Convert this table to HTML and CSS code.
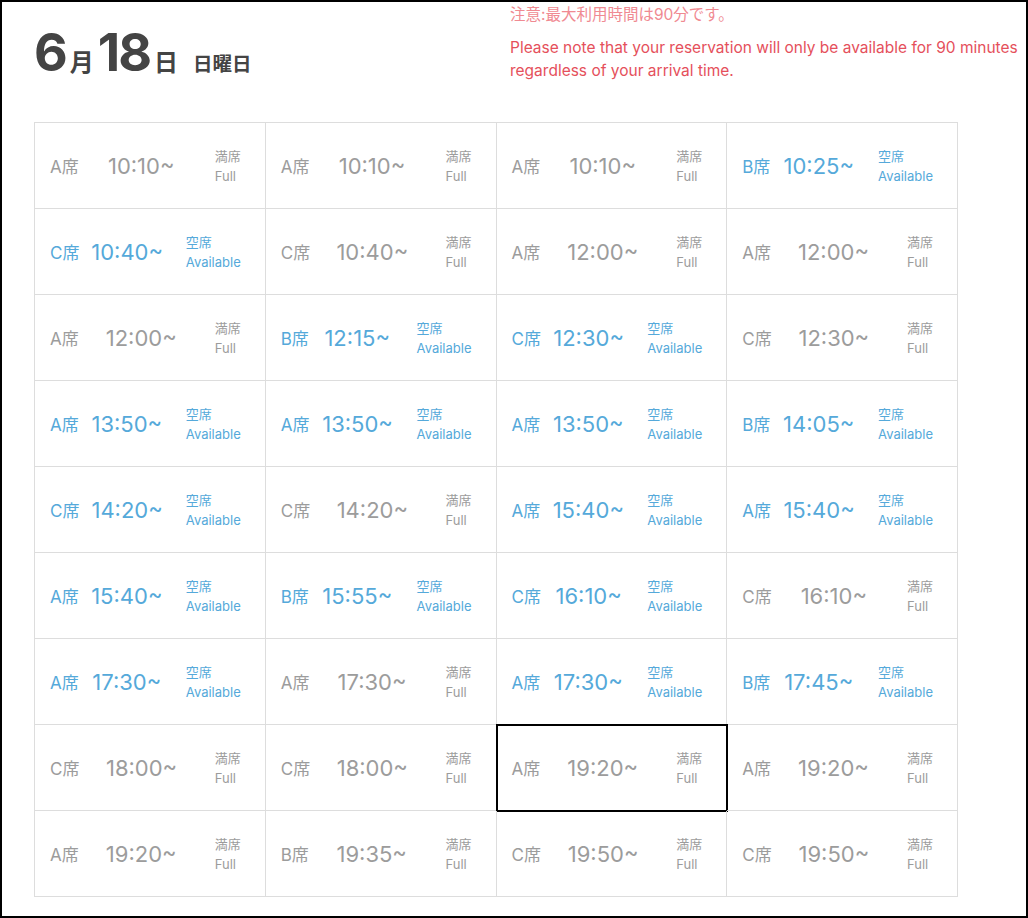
FILE: index.html
```html
<!DOCTYPE html>
<html>
<head>
<meta charset="utf-8">
<link rel="stylesheet" href="styles.css">
</head>
<body>
<div class="frame">
  <div class="head">
    <div class="date">
      <span class="big">6</span><span class="unit">月</span><span class="big">18</span><span class="unit">日</span><span class="dow">日曜日</span>
    </div>
    <div class="notice">
      <p class="ja">注意:最大利用時間は90分です。</p>
      <p class="en">Please note that your reservation will only be available for 90 minutes regardless of your arrival time.</p>
    </div>
  </div>

  <div class="slots">
    <div class="slot full"><span class="seat">A席</span><span class="time">10:10~</span><span class="state">満席<br>Full</span></div>
    <div class="slot full"><span class="seat">A席</span><span class="time">10:10~</span><span class="state">満席<br>Full</span></div>
    <div class="slot full"><span class="seat">A席</span><span class="time">10:10~</span><span class="state">満席<br>Full</span></div>
    <div class="slot open"><span class="seat">B席</span><span class="time">10:25~</span><span class="state">空席<br>Available</span></div>

    <div class="slot open"><span class="seat">C席</span><span class="time">10:40~</span><span class="state">空席<br>Available</span></div>
    <div class="slot full"><span class="seat">C席</span><span class="time">10:40~</span><span class="state">満席<br>Full</span></div>
    <div class="slot full"><span class="seat">A席</span><span class="time">12:00~</span><span class="state">満席<br>Full</span></div>
    <div class="slot full"><span class="seat">A席</span><span class="time">12:00~</span><span class="state">満席<br>Full</span></div>

    <div class="slot full"><span class="seat">A席</span><span class="time">12:00~</span><span class="state">満席<br>Full</span></div>
    <div class="slot open"><span class="seat">B席</span><span class="time">12:15~</span><span class="state">空席<br>Available</span></div>
    <div class="slot open"><span class="seat">C席</span><span class="time">12:30~</span><span class="state">空席<br>Available</span></div>
    <div class="slot full"><span class="seat">C席</span><span class="time">12:30~</span><span class="state">満席<br>Full</span></div>

    <div class="slot open"><span class="seat">A席</span><span class="time">13:50~</span><span class="state">空席<br>Available</span></div>
    <div class="slot open"><span class="seat">A席</span><span class="time">13:50~</span><span class="state">空席<br>Available</span></div>
    <div class="slot open"><span class="seat">A席</span><span class="time">13:50~</span><span class="state">空席<br>Available</span></div>
    <div class="slot open"><span class="seat">B席</span><span class="time">14:05~</span><span class="state">空席<br>Available</span></div>

    <div class="slot open"><span class="seat">C席</span><span class="time">14:20~</span><span class="state">空席<br>Available</span></div>
    <div class="slot full"><span class="seat">C席</span><span class="time">14:20~</span><span class="state">満席<br>Full</span></div>
    <div class="slot open"><span class="seat">A席</span><span class="time">15:40~</span><span class="state">空席<br>Available</span></div>
    <div class="slot open"><span class="seat">A席</span><span class="time">15:40~</span><span class="state">空席<br>Available</span></div>

    <div class="slot open"><span class="seat">A席</span><span class="time">15:40~</span><span class="state">空席<br>Available</span></div>
    <div class="slot open"><span class="seat">B席</span><span class="time">15:55~</span><span class="state">空席<br>Available</span></div>
    <div class="slot open"><span class="seat">C席</span><span class="time">16:10~</span><span class="state">空席<br>Available</span></div>
    <div class="slot full"><span class="seat">C席</span><span class="time">16:10~</span><span class="state">満席<br>Full</span></div>

    <div class="slot open"><span class="seat">A席</span><span class="time">17:30~</span><span class="state">空席<br>Available</span></div>
    <div class="slot full"><span class="seat">A席</span><span class="time">17:30~</span><span class="state">満席<br>Full</span></div>
    <div class="slot open"><span class="seat">A席</span><span class="time">17:30~</span><span class="state">空席<br>Available</span></div>
    <div class="slot open"><span class="seat">B席</span><span class="time">17:45~</span><span class="state">空席<br>Available</span></div>

    <div class="slot full"><span class="seat">C席</span><span class="time">18:00~</span><span class="state">満席<br>Full</span></div>
    <div class="slot full"><span class="seat">C席</span><span class="time">18:00~</span><span class="state">満席<br>Full</span></div>
    <div class="slot full selected"><span class="seat">A席</span><span class="time">19:20~</span><span class="state">満席<br>Full</span></div>
    <div class="slot full"><span class="seat">A席</span><span class="time">19:20~</span><span class="state">満席<br>Full</span></div>

    <div class="slot full"><span class="seat">A席</span><span class="time">19:20~</span><span class="state">満席<br>Full</span></div>
    <div class="slot full"><span class="seat">B席</span><span class="time">19:35~</span><span class="state">満席<br>Full</span></div>
    <div class="slot full"><span class="seat">C席</span><span class="time">19:50~</span><span class="state">満席<br>Full</span></div>
    <div class="slot full"><span class="seat">C席</span><span class="time">19:50~</span><span class="state">満席<br>Full</span></div>
  </div>
</div>
</body>
</html>
```

FILE: styles.css
```css
html, body {
  margin: 0;
  padding: 0;
  background: #fff;
}

.frame {
  box-sizing: border-box;
  width: 1028px;
  height: 918px;
  border: 2px solid #000;
  padding: 0 0 0 32px;
  font-family: Inter, "Noto Sans CJK JP", sans-serif;
  color: #999;
}

.head {
  display: flex;
  height: 120px;
}

.date {
  flex: 0 0 476px;
  padding-top: 19px;
  color: #444;
  font-weight: bold;
  white-space: nowrap;
}

.date .big {
  font-size: 52px;
  letter-spacing: -2px;
}

.date .unit {
  font-size: 24px;
  margin: 0 4px 0 4px;
}

.date .dow {
  font-size: 19.5px;
  font-weight: 600;
  margin-left: 11px;
}

.notice {
  padding-top: 3px;
  color: #e5505b;
}

.notice p {
  margin: 0;
}

.notice .ja {
  font-size: 15.5px;
  line-height: 20px;
  color: #f08a92;
  margin-bottom: 11px;
}

.notice .en {
  font-size: 15.5px;
  line-height: 23px;
}

.slots {
  display: grid;
  grid-template-columns: repeat(4, 1fr);
  grid-auto-rows: 86px;
  width: 924px;
  box-sizing: border-box;
  border-top: 1px solid #ddd;
  border-left: 1px solid #ddd;
}

.slot {
  display: flex;
  align-items: center;
  border-right: 1px solid #ddd;
  border-bottom: 1px solid #ddd;
  padding: 0 24px 0 15px;
}

.slot .seat {
  font-size: 17px;
}

.slot .time {
  flex: 1;
  text-align: center;
  font-size: 22px;
  padding-right: 11px;
}

.slot .state {
  font-size: 13px;
  line-height: 20px;
}

.slot.open {
  color: #55a9da;
}

.slot.full {
  color: #9c9c9c;
}

.slot.selected {
  outline: 2px solid #000;
  outline-offset: -1px;
}
```
